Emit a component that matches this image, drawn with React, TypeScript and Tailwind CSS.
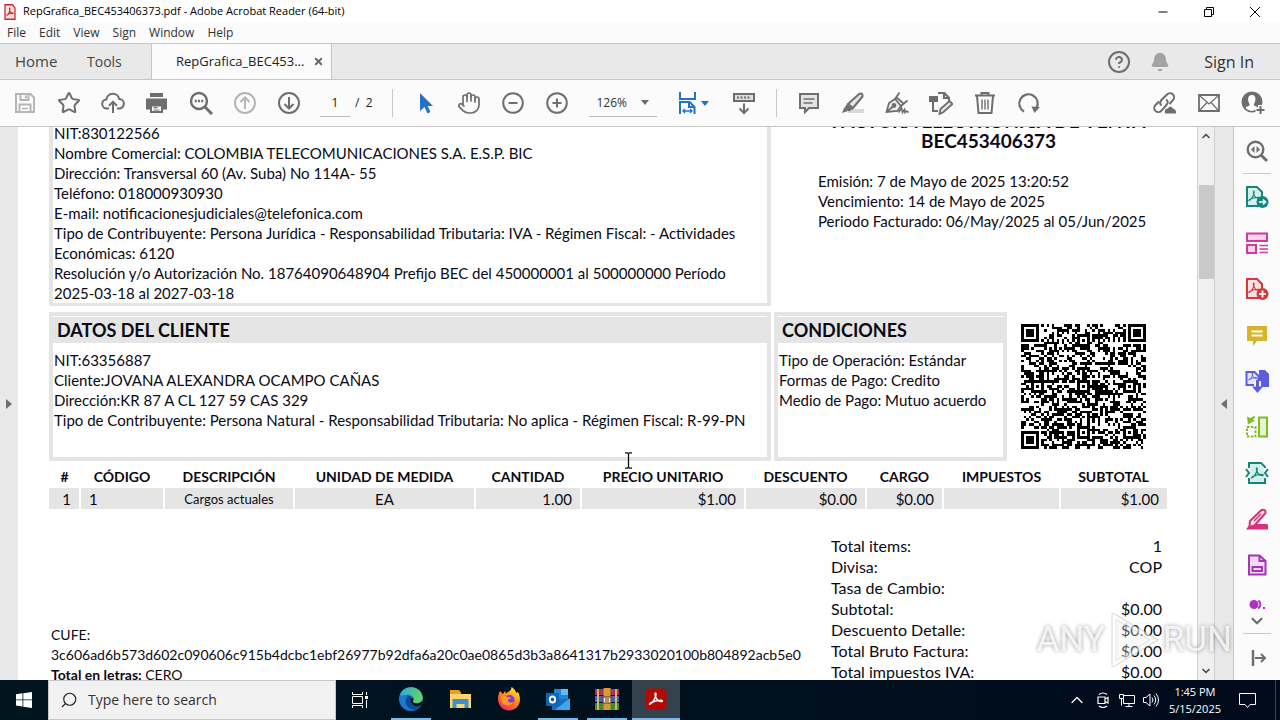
import React from "react";
import {
  Bell,
  ChevronDown,
  ChevronUp,
  CircleHelp,
  Hand,
  Minus,
  Search,
  Star,
  X,
} from "lucide-react";

const GRAY = "#6e6e6e";

interface IconProps {
  label: string;
  children: React.ReactNode;
  className?: string;
}

function IconButton({ label, children, className = "" }: IconProps) {
  return (
    <button
      type="button"
      aria-label={label}
      className={`flex h-6 w-6 shrink-0 items-center justify-center ${className}`}
    >
      {children}
    </button>
  );
}

interface GlyphProps {
  children: React.ReactNode;
  color?: string;
  width?: number;
}

function Glyph({ children, color = GRAY, width = 2 }: GlyphProps) {
  return (
    <svg
      viewBox="0 0 24 24"
      className="h-6 w-6"
      fill="none"
      stroke={color}
      strokeWidth={width}
      aria-hidden="true"
    >
      {children}
    </svg>
  );
}

const acrobatSwirl =
  "M6 17c2-1 4.500-4.500 5.500-7.500.6-2 .6-3.500 0-3.500s-.7 1.600 0 3.500c1 2.700 3.500 5 6 5 1.500 0 1.200-1.200-.5-1.200-3 0-7.500 1-10.500 2.700-1 .7-1.200 1.500-.5 1z";

/* ---------- window chrome ---------- */

const menus = ["File", "Edit", "View", "Sign", "Window", "Help"];

function TitleBar() {
  return (
    <header className="bg-white">
      <div className="flex h-[23px] items-center pl-1">
        <svg viewBox="0 0 24 24" className="h-4 w-3" preserveAspectRatio="none" aria-hidden="true">
          <path d="M2 1h15l5 5v17H2z" fill="#fbe3e3" stroke="#c9252d" strokeWidth="2.500" />
          <path d={acrobatSwirl} stroke="#c9252d" strokeWidth="1.800" fill="none" />
        </svg>
        <h1 className="ml-[7px] text-[11px] text-black">
          RepGrafica_BEC453406373.pdf - Adobe Acrobat Reader (64-bit)
        </h1>
        <div className="ml-auto flex pr-0.5 text-black">
          <button type="button" aria-label="Minimize" className="flex h-5 w-[46px] items-center justify-center">
            <Minus size={14} strokeWidth={1.8} />
          </button>
          <button type="button" aria-label="Restore" className="flex h-5 w-[46px] items-center justify-center">
            <svg viewBox="0 0 10 10" className="h-2.5 w-2.5" fill="none" stroke="#000" aria-hidden="true">
              <path d="M.5 2.500h7v7h-7zM2.500 2.500v-2h7v7h-2" />
            </svg>
          </button>
          <button type="button" aria-label="Close" className="flex h-5 w-[46px] items-center justify-center">
            <svg viewBox="0 0 10 10" className="h-2.5 w-2.5" stroke="#000" aria-hidden="true">
              <path d="M0 0l10 10M10 0L0 10" />
            </svg>
          </button>
        </div>
      </div>
      <nav className="flex h-5 items-center gap-[13px] bg-[#fbfbfb] pl-[7px] text-xs text-[#333]">
        {menus.map((menu) => (
          <button key={menu} type="button">
            {menu}
          </button>
        ))}
      </nav>
    </header>
  );
}

function TabBar() {
  return (
    <div className="flex h-[37px] items-stretch border-y border-[#c6c6c6] bg-[#e9e9e9] text-[15px] text-[#444]">
      <button type="button" className="w-[73px] pl-[15px] text-left">
        Home
      </button>
      <button type="button" className="w-[78px] pl-3.5 text-left text-sm">
        Tools
      </button>
      <div className="flex w-[181px] items-center border-x border-[#c6c6c6] bg-[#fbfbfb]">
        <button type="button" className="ml-6 flex-1 text-left text-[13px] text-[#222]">
          RepGrafica_BEC453...
        </button>
        <button type="button" aria-label="Close tab" className="mr-[7px]">
          <X size={11} strokeWidth={4} color="#666" />
        </button>
      </div>
      <div className="ml-auto flex items-center pr-[26px]">
        <button type="button" aria-label="Help">
          <CircleHelp size={24} strokeWidth={2} color={GRAY} />
        </button>
        <button type="button" aria-label="Notifications" className="ml-[19px]">
          <Bell size={20} strokeWidth={2} fill="#a3a3a3" color="#a3a3a3" />
        </button>
        <button type="button" className="ml-[34px] text-base text-[#333]">
          Sign In
        </button>
      </div>
    </div>
  );
}

function Divider() {
  return <span className="h-7 w-px shrink-0 bg-[#c8c8c8]" />;
}

function Toolbar() {
  return (
    <div className="flex h-[47px] items-center border-b border-[#c6c6c6] bg-[#fbfbfb] pr-[15px] pl-[13px]">
      <div className="flex gap-5">
        <IconButton label="Save">
          <Glyph color="#b5b5b5">
            <path d="M3 3h14.500L21 6.500V21H3z" />
            <path d="M7.500 3v6h8V3M12.800 4.500v3M6.500 21v-7.500h11V21" />
            <path d="M9 17.500h6" strokeWidth="1.500" />
          </Glyph>
        </IconButton>
        <IconButton label="Add to favourites">
          <Star size={24} strokeWidth={2} strokeLinejoin="miter" color={GRAY} />
        </IconButton>
        <IconButton label="Upload">
          <Glyph>
            <path d="M8 17.500H6a4.500 4.500 0 0 1-.6-9 6.500 6.500 0 0 1 12.800-.6A4.800 4.800 0 0 1 18 17.500h-2M12 22V11.500M8 14.800l4-4 4 4" />
          </Glyph>
        </IconButton>
        <IconButton label="Print">
          <Glyph>
            <path d="M5 2h13v4H5z" fill={GRAY} stroke="none" />
            <path d="M1 7.500h21v11h-4v-4H5v4H1z" fill={GRAY} stroke="none" />
            <path d="M6 14.500h11V21H6z" fill="#fff" />
            <path d="M8.500 16.700h4M8.500 19h6" strokeWidth="1.200" />
          </Glyph>
        </IconButton>
        <IconButton label="Find">
          <Glyph width={2.4}>
            <circle cx="10" cy="10" r="8" />
            <path d="M16 16l7 7" strokeWidth="3" />
            <path d="M5.800 10h2M9 10h2M12.200 10h2" />
          </Glyph>
        </IconButton>
        <IconButton label="Previous page">
          <Glyph color="#b5b5b5">
            <circle cx="12" cy="12" r="10" />
            <path d="M12 18V7M7.500 11L12 6.500 16.500 11" />
          </Glyph>
        </IconButton>
        <IconButton label="Next page">
          <Glyph>
            <circle cx="12" cy="12" r="10" />
            <path d="M12 6v11M7.500 13l4.500 4.500 4.500-4.500" />
          </Glyph>
        </IconButton>
      </div>
      <label className="ml-[19px] flex items-center text-xs text-[#222]">
        <input
          aria-label="Page number"
          defaultValue="1"
          className="h-[27px] w-[30px] border-b border-[#bdbdbd] bg-transparent text-center outline-none"
        />
        <span className="ml-[5px] whitespace-pre">/  2</span>
      </label>
      <div className="ml-[19px] flex items-center gap-5">
        <Divider />
        <IconButton label="Select">
          <Glyph color="none">
            <path d="M7 2v18l4.500-4 3 6.500 3-1.500-3-6h5.500z" fill="#2371c9" />
          </Glyph>
        </IconButton>
        <IconButton label="Pan">
          <Hand size={24} strokeWidth={1.7} color={GRAY} />
        </IconButton>
        <IconButton label="Zoom out">
          <Glyph>
            <circle cx="12" cy="12" r="9.800" />
            <path d="M7.500 12h9" />
          </Glyph>
        </IconButton>
        <IconButton label="Zoom in">
          <Glyph>
            <circle cx="12" cy="12" r="9.800" />
            <path d="M7.500 12h9M12 7.500v9" />
          </Glyph>
        </IconButton>
      </div>
      <div className="ml-5 flex h-[27px] w-[68px] shrink-0 items-center border-b border-[#bdbdbd]">
        <select
          aria-label="Zoom level"
          defaultValue="126"
          className="w-12 appearance-none bg-transparent pl-2 text-xs text-[#333] outline-none"
        >
          <option value="126">126%</option>
        </select>
        <span className="ml-1 border-x-4 border-t-[5px] border-x-transparent border-t-[#6e6e6e]" />
      </div>
      <button type="button" aria-label="Fit width" className="ml-[18px] flex items-center gap-0.5">
        <Glyph color="#2371c9">
          <path d="M5 1v7h15V1M5 23V11h9.500l5 5v7M14 11v5h5.500" />
          <path d="M8 20h9M10 18l-2 2 2 2M15 18l2 2-2 2" strokeWidth="1.300" />
        </Glyph>
        <span className="border-x-4 border-t-[5px] border-x-transparent border-t-[#2371c9]" />
      </button>
      <IconButton label="Reading mode" className="ml-[23px]">
        <Glyph>
          <path d="M2 3h20v7H2z" fill="#ddd" />
          <path d="M5 6.500h14" strokeDasharray="2 1.500" />
          <path d="M12 12.500v9M7.500 17.500l4.500 4.500 4.500-4.500" />
        </Glyph>
      </IconButton>
      <div className="ml-5 flex items-center gap-5">
        <Divider />
        <IconButton label="Comment">
          <Glyph>
            <path d="M3 3h18v14h-9l-4 4v-4H3z" fill="#e4e4e4" />
            <path d="M6.500 8h11M6.500 12h9" strokeWidth="1.500" />
          </Glyph>
        </IconButton>
        <IconButton label="Highlight">
          <Glyph>
            <path d="M10 18h13v4H6z" fill="#d8d8d8" stroke="none" />
            <path d="M7 13L18 3q4-1.500 3.500 2.500L12 17z" fill="#e4e4e4" />
            <path d="M6 13l6 5-4 2.500-5-3z" fill={GRAY} stroke="none" />
            <path d="M3 17l4 3-6 2z" fill={GRAY} stroke="none" />
          </Glyph>
        </IconButton>
        <IconButton label="Sign">
          <Glyph width={1.8}>
            <path d="M1.500 21L4 12l6-4 6 7-3.500 5z" fill="#eee" />
            <path d="M1.500 21l6.500-5.500M10 8l4.500-6.500M16 15l6.500-5.500M11.500 6.500l7 6" />
            <circle cx="9" cy="14.500" r="1.500" fill={GRAY} />
            <path d="M13.500 21.500l3-4.500 1 4.500 2-3 .5 3 1.500-1.500 2 1.500" strokeWidth="1.600" />
          </Glyph>
        </IconButton>
        <IconButton label="Edit PDF">
          <Glyph>
            <path d="M9 2h6.500L20 7v3M15 2v5h5M4 11v9h5" />
            <path d="M0 5h9v6H0z" fill={GRAY} stroke="none" />
            <path d="M10.500 23l1-5 9-8 3 3-9 8z" fill="#e4e4e4" strokeWidth="1.800" />
          </Glyph>
        </IconButton>
        <IconButton label="Delete">
          <Glyph>
            <path d="M2 4.500h20M8.500 4V2h7v2M4 5l1.500 17h13L20 5" />
            <path d="M9 8.500v10M12 8.500v10M15 8.500v10" strokeWidth="1.400" />
          </Glyph>
        </IconButton>
        <IconButton label="Rotate">
          <Glyph width={2.2}>
            <path d="M7 20.500a9.200 9.200 0 1 1 12.500-3.500" />
            <path d="M14.500 15.500l8.500.5-5.500 6z" fill={GRAY} stroke="none" />
          </Glyph>
        </IconButton>
      </div>
      <div className="ml-auto flex items-center gap-5">
        <IconButton label="Share link">
          <Glyph width={2}>
            <path d="M8.500 14.500q-2.500-2-.5-5l6-6a4 4 0 0 1 6 5.500l-3.500 4" />
            <path d="M13 8.500q3 2 .8 5l-5.500 6.300a4 4 0 0 1-6-5.500L6 10.500" />
            <path d="M12 22.500q-1-5 3-5 2-4 5 0 3.500 1 3 5z" fill={GRAY} stroke="none" />
          </Glyph>
        </IconButton>
        <IconButton label="Send by email">
          <Glyph width={1.8}>
            <path d="M2 4h20v16H2z" />
            <path d="M3 5l9 8 9-8M3 19l7-7.500M21 19l-7-7.500" strokeWidth="1.300" />
          </Glyph>
        </IconButton>
        <IconButton label="Add person">
          <Glyph>
            <circle cx="11" cy="11" r="10.500" fill={GRAY} stroke="none" />
            <path d="M11 4c-5 0-4.500 6-2.500 9v1.500c-1.500 1-3 1-4 2.500q6 6 12.500 0c-1-1.500-2.500-1.500-4-2.500V13c2-3 2.500-9-2-9z" fill="#fff" stroke="none" />
            <path d="M19.500 14v10M14.500 19h10" stroke="#fbfbfb" strokeWidth="5" />
            <path d="M19.500 15v8M15.500 19h8" />
          </Glyph>
        </IconButton>
      </div>
    </div>
  );
}

/* ---------- document ---------- */

const issuerLines = [
  "NIT:830122566",
  "Nombre Comercial: COLOMBIA TELECOMUNICACIONES S.A. E.S.P. BIC",
  "Dirección: Transversal 60 (Av. Suba) No 114A- 55",
  "Teléfono: 018000930930",
  "E-mail: notificacionesjudiciales@telefonica.com",
  "Tipo de Contribuyente: Persona Jurídica - Responsabilidad Tributaria: IVA - Régimen Fiscal: - Actividades",
  "Económicas: 6120",
  "Resolución y/o Autorización No. 18764090648904 Prefijo BEC del 450000001 al 500000000 Período",
  "2025-03-18 al 2027-03-18",
];

const clientLines = [
  "NIT:63356887",
  "Cliente:JOVANA ALEXANDRA OCAMPO CAÑAS",
  "Dirección:KR 87 A CL 127 59 CAS 329",
  "Tipo de Contribuyente: Persona Natural - Responsabilidad Tributaria: No aplica - Régimen Fiscal: R-99-PN",
];

const conditionLines = [
  "Tipo de Operación: Estándar",
  "Formas de Pago: Credito",
  "Medio de Pago: Mutuo acuerdo",
];

const columns = [
  { name: "#", col: "w-[31px]", cell: "pr-2 text-right", value: "1" },
  { name: "CÓDIGO", col: "w-[84px]", cell: "pl-2 text-left", value: "1" },
  { name: "DESCRIPCIÓN", col: "w-[130px]", cell: "text-center text-[13px]", value: "Cargos actuales" },
  { name: "UNIDAD DE MEDIDA", col: "w-[181px]", cell: "text-center", value: "EA" },
  { name: "CANTIDAD", col: "w-[106px]", cell: "pr-2 text-right", value: "1.00" },
  { name: "PRECIO UNITARIO", col: "w-[164px]", cell: "pr-2 text-right", value: "$1.00" },
  { name: "DESCUENTO", col: "w-[121px]", cell: "pr-2 text-right", value: "$0.00" },
  { name: "CARGO", col: "w-[77px]", cell: "pr-2 text-right", value: "$0.00" },
  { name: "IMPUESTOS", col: "w-[117px]", cell: "pr-2 text-right", value: "" },
  { name: "SUBTOTAL", col: "w-[107px]", cell: "pr-2 text-right", value: "$1.00" },
];

const totals = [
  ["Total items:", "1"],
  ["Divisa:", "COP"],
  ["Tasa de Cambio:", ""],
  ["Subtotal:", "$0.00"],
  ["Descuento Detalle:", "$0.00"],
  ["Total Bruto Factura:", "$0.00"],
  ["Total impuestos IVA:", "$0.00"],
];

const QR_SIZE = 49;

// ring distance from a centre, used for finder and alignment marks
function ring(x: number, y: number, cx: number, cy: number) {
  return Math.max(Math.abs(x - cx), Math.abs(y - cy));
}

function buildQrPath() {
  const finders = [[3, 3], [45, 3], [3, 45]];
  const aligns = [[24, 6], [6, 24], [24, 24], [42, 24], [24, 42], [42, 42]];
  let seed = 453406373;
  let path = "";
  for (let y = 0; y < QR_SIZE; y++) {
    for (let x = 0; x < QR_SIZE; x++) {
      seed = (Math.imul(seed, 1664525) + 1013904223) >>> 0;
      let dark = seed / 4294967296 < 0.5;
      if (x === 6) dark = y % 2 === 0;
      if (y === 6) dark = x % 2 === 0;
      for (const [cx, cy] of aligns) {
        const d = ring(x, y, cx, cy);
        if (d <= 2) dark = d !== 1;
      }
      for (const [cx, cy] of finders) {
        const d = ring(x, y, cx, cy);
        if (d <= 4) dark = d !== 2 && d !== 4;
      }
      if (dark) path += `M${x} ${y}h1v1h-1z`;
    }
  }
  return path;
}

const qrPath = buildQrPath();

function Panel({ title, lines }: { title: string; lines: string[] }) {
  return (
    <section className="border-4 border-[#e5e5e5] pb-[27px]">
      <h2 className="mt-px bg-[#e5e5e5] pl-1 text-lg leading-[26px] font-bold">{title}</h2>
      <div className="mt-[7px] pl-px">
        {lines.map((line) => (
          <p key={line}>{line}</p>
        ))}
      </div>
    </section>
  );
}

function InvoicePage() {
  return (
    <article className="-mt-4 pr-[30px] pl-[31px] font-['Lato','Noto_Sans',sans-serif] text-[15px] leading-5 whitespace-nowrap text-[#0a0a14]">
      <div className="grid grid-cols-[722fr_393fr] gap-[3px]">
        <section className="border-x-4 border-b-[3px] border-[#e5e5e5] pt-3 pl-px">
          {issuerLines.map((line) => (
            <p key={line}>{line}</p>
          ))}
        </section>
        <section className="pl-9">
          <h2 className="text-center text-[19px] font-bold">
            FACTURA ELECTRÓNICA DE VENTA
            <br />
            BEC453406373
          </h2>
          <div className="mt-5 pl-2">
            <p>Emisión: 7 de Mayo de 2025 13:20:52</p>
            <p>Vencimiento: 14 de Mayo de 2025</p>
            <p>Periodo Facturado: 06/May/2025 al 05/Jun/2025</p>
          </div>
        </section>
      </div>

      <div className="mt-1.5 grid grid-cols-[722fr_233fr_157fr] gap-[3px]">
        <Panel title="DATOS DEL CLIENTE" lines={clientLines} />
        <Panel title="CONDICIONES" lines={conditionLines} />
        <svg
          viewBox="0 0 49 49"
          role="img"
          aria-label="QR code"
          shapeRendering="crispEdges"
          className="mt-3 ml-[11px] h-[125px] w-[125px]"
        >
          <path d={qrPath} fill="#000" />
        </svg>
      </div>

      <table className="mt-[5px] w-full table-fixed">
        <colgroup>
          {columns.map((column) => (
            <col key={column.name} className={column.col} />
          ))}
        </colgroup>
        <thead>
          <tr className="h-[22px] text-sm">
            {columns.map((column) => (
              <th key={column.name} className="p-0 pb-px">
                {column.name}
              </th>
            ))}
          </tr>
        </thead>
        <tbody>
          <tr className="h-[21px] bg-[#e5e5e5]">
            {columns.map((column) => (
              <td
                key={column.name}
                className={`border-r-2 border-white py-0 last:border-r-0 ${column.cell}`}
              >
                {column.value}
              </td>
            ))}
          </tr>
        </tbody>
      </table>

      <div className="mt-[26px] flex items-start justify-between pr-[5px] pl-0.5">
        <div className="mt-[90px] text-sm leading-5">
          <p>CUFE:</p>
          <p>3c606ad6b573d602c090606c915b4dcbc1ebf26977b92dfa6a20c0ae0865d3b3a8641317b2933020100b804892acb5e0</p>
          <p>
            <b>Total en letras:</b> CERO
          </p>
        </div>
        <dl className="w-[331px] text-base leading-[21px]">
          {totals.map(([label, value]) => (
            <div key={label} className="flex justify-between">
              <dt>{label}</dt>
              <dd>{value}</dd>
            </div>
          ))}
        </dl>
      </div>
    </article>
  );
}

function Scrollbar() {
  return (
    <div className="flex w-[18px] shrink-0 flex-col items-center border-x border-[#d0d0d0] bg-[#f0f0f0]">
      <button type="button" aria-label="Scroll up" className="flex h-[18px] items-center">
        <ChevronUp size={12} strokeWidth={3.5} color="#505050" />
      </button>
      <div className="mt-10 h-[94px] w-[15px] bg-[#c9c9c9]" />
      <button type="button" aria-label="Scroll down" className="mt-auto flex h-[18px] items-center">
        <ChevronDown size={12} strokeWidth={3.5} color="#505050" />
      </button>
    </div>
  );
}

/* ---------- tools rail ---------- */

interface Tool {
  label: string;
  icon: React.ReactNode;
}

const tools: Tool[] = [
  {
    label: "Export PDF",
    icon: (
      <Glyph color="#13857c">
        <path d="M2 2h10l5 5v14H2z" fill="#d5efed" />
        <path d={acrobatSwirl} transform="translate(-1 1) scale(.85)" strokeWidth="1.300" />
        <circle cx="17.500" cy="17" r="6" fill="#13857c" stroke="none" />
        <path d="M14 17h6M18 14.500l2.500 2.500-2.500 2.500" stroke="#fff" strokeWidth="1.600" />
      </Glyph>
    ),
  },
  {
    label: "Edit PDF",
    icon: (
      <Glyph color="#cf3a9b">
        <path d="M2 2.500h20v7.500H2zM2 14h9v8H2z" fill="#f6d3ea" />
        <path d="M14.500 14.500H23M14.500 18H23M14.500 21.500H23" strokeWidth="1.400" />
      </Glyph>
    ),
  },
  {
    label: "Create PDF",
    icon: (
      <Glyph color="#d7373f">
        <path d="M2 2h10l5 5v14H2z" fill="#fbe3e3" />
        <path d={acrobatSwirl} transform="translate(-1 1) scale(.85)" strokeWidth="1.300" />
        <circle cx="17.500" cy="17" r="6" fill="#d7373f" stroke="none" />
        <path d="M14 17h7M17.500 13.500v7" stroke="#fff" strokeWidth="1.800" />
      </Glyph>
    ),
  },
  {
    label: "Comment",
    icon: (
      <Glyph color="#fff">
        <path d="M2 3h20v15H12l-4 5v-5H2z" fill="#d6b52a" stroke="none" />
        <path d="M6.500 8.500h11M6.500 12.500h11" />
      </Glyph>
    ),
  },
  {
    label: "Combine Files",
    icon: (
      <Glyph color="#5c5ce0">
        <path d="M14 1h6l4 4v13H14z" fill="#5c5ce0" stroke="none" />
        <path d="M1.500 3h8l4 4v9h-12z" fill="#e4e4fb" />
        <path d={acrobatSwirl} transform="scale(.65)" strokeWidth="1.500" />
        <path d="M12.500 12v8" stroke="#fbfbfb" strokeWidth="7" />
        <path d="M12.500 11v9" strokeWidth="3" />
        <path d="M7 17.500h11L12.500 24z" fill="#5c5ce0" stroke="none" />
      </Glyph>
    ),
  },
  {
    label: "Organize Pages",
    icon: (
      <Glyph color="#82b927">
        <path d="M14 2.500h8v19h-8z" fill="#e6f3d1" />
        <path d="M2 12h8.500v9.500H2z" strokeDasharray="2.500 1.500" />
        <path d="M10 2Q6 3 5 6" />
        <path d="M2 1.500l1 8 7-4z" fill="#82b927" stroke="none" />
      </Glyph>
    ),
  },
  {
    label: "Compress PDF",
    icon: (
      <Glyph color="#13857c">
        <path d="M4 7V2h12l4 4v1M4 17v5h16v-5" />
        <path d="M5.500 3h10L19 6.500V21H5.500z" fill="#d5efed" stroke="none" />
        <path d={acrobatSwirl} transform="translate(1.500 1.500) scale(.9)" strokeWidth="1.400" />
        <path d="M1 8l3 4-3 4M23 8l-3 4 3 4" />
      </Glyph>
    ),
  },
  {
    label: "Redact",
    icon: (
      <Glyph color="#d6317c">
        <path d="M1 22.500L5 17h17l1 1v4.500z" fill="#d6317c" stroke="none" />
        <path d="M5 14L16.500 3q4.500-1 4 3L9.500 18.500 4.500 20z" fill="#fbdcea" />
        <path d="M9 14l7-7" strokeWidth="1.400" />
      </Glyph>
    ),
  },
  {
    label: "Prepare Form",
    icon: (
      <Glyph color="#a832b8">
        <path d="M4 2.500h10.500L20.500 8v13.500H4z" fill="#f1dcf4" />
        <path d="M14.500 2.500V8h6M7.500 14h9.500v4H7.500z" />
      </Glyph>
    ),
  },
];

function ToolsRail() {
  return (
    <aside className="flex w-[47px] shrink-0 flex-col items-center border-l border-[#c6c6c6] bg-[#fbfbfb]">
      <IconButton label="Search tools" className="mt-3">
        <Glyph width={2.4}>
          <circle cx="10.500" cy="10.500" r="7.800" />
          <path d="M16 16l6 6" strokeWidth="3" />
          <path d="M9.500 7v7L6 10.500zM11.500 7v7l3.500-3.500z" fill={GRAY} stroke="none" />
        </Glyph>
      </IconButton>
      <span className="mt-2.5 h-px w-7 bg-[#c8c8c8]" />
      <div className="mt-[11px] flex flex-col gap-[22px]">
        {tools.map((tool) => (
          <IconButton key={tool.label} label={tool.label}>
            {tool.icon}
          </IconButton>
        ))}
      </div>
      <svg viewBox="0 0 16 9" className="mt-[23px] h-[9px] w-4" aria-hidden="true">
        <circle cx="5" cy="4.500" r="4.500" fill="#b130bd" />
        <path d="M9.500.5q4 4-.3 8" stroke="#b130bd" strokeWidth="2" fill="none" />
        <path d="M14 7h2v2h-2z" fill="#b130bd" />
      </svg>
      <button type="button" aria-label="More tools" className="mt-[3px]">
        <ChevronDown size={18} strokeWidth={3} color={GRAY} />
      </button>
      <span className="mt-[3px] h-px w-7 bg-[#c8c8c8]" />
      <button type="button" aria-label="Collapse pane" className="mt-4 ml-1">
        <svg viewBox="0 0 16 16" className="h-4 w-4" fill="none" stroke={GRAY} strokeWidth="2" aria-hidden="true">
          <path d="M2 0v16" strokeWidth="2.500" />
          <path d="M4 8h10M10 4l4 4-4 4" />
        </svg>
      </button>
    </aside>
  );
}

/* ---------- taskbar ---------- */

interface TaskApp {
  label: string;
  state: "open" | "idle" | "active";
  icon: React.ReactNode;
}

const taskApps: TaskApp[] = [
  {
    label: "Edge",
    state: "open",
    icon: (
      <svg viewBox="0 0 24 24" className="h-6 w-6" aria-hidden="true">
        <defs>
          <linearGradient id="edgeTop" x1="0" y1="0" x2="1" y2=".3">
            <stop offset="0" stopColor="#2aa5dd" />
            <stop offset="1" stopColor="#63d36b" />
          </linearGradient>
        </defs>
        <circle cx="12" cy="12" r="12" fill="#1a78cf" />
        <path d="M1 8C4-2 20-3 23.500 9c1 6-4 8-8 7-2-.6-2-1.500-1.200-2.500C16 10 11 6 6 8q-3 .8-5 0z" fill="url(#edgeTop)" />
        <path d="M9 9c-4 3-3 10 3 13 4 2 7 0 10-4-4 2.500-9 1-10-3-.6-2 1-4 0-6z" fill="#0d4a94" />
        <path d="M13.500 10.500c2.500 2-.8 3.500 1 5 3 1.500 6 1.200 8.500-1.500L24 17l-3 1.500c-4 2-10-1-9.500-6z" fill="#00141e" />
      </svg>
    ),
  },
  {
    label: "File Explorer",
    state: "idle",
    icon: (
      <svg viewBox="0 0 24 24" className="h-6 w-6" aria-hidden="true">
        <path d="M2 3h9l2 2.500V21H2z" fill="#e8a31c" />
        <path d="M2 7h21v14H2z" fill="#fcd667" />
        <path d="M5.500 12h14q1 0 1 1v8h-4v-4h-8v4h-4v-8q0-1 1-1z" fill="#3e8ed0" />
      </svg>
    ),
  },
  {
    label: "Firefox",
    state: "idle",
    icon: (
      <svg viewBox="0 0 24 24" className="h-6 w-6" aria-hidden="true">
        <defs>
          <linearGradient id="fox" x1=".8" y1="0" x2=".2" y2="1">
            <stop offset="0" stopColor="#fff03a" />
            <stop offset=".45" stopColor="#ff8a16" />
            <stop offset="1" stopColor="#f0206e" />
          </linearGradient>
        </defs>
        <path d="M3 4l3 3 2-3 1 2.500C11 4 14 5 14.500 0 18 2 19 5 19.500 6l1.500-1c5 9 0 18.500-9 18.500S-2 14 3 4z" fill="url(#fox)" />
        <circle cx="12.500" cy="13" r="5" fill="#7a3be0" />
        <path d="M4 10c3-2 6-1 7 .5 1.500-.5 3 0 3 1-2 0-3 1-3 2.500 1 2 4 2 6 .5-1 4-9 5.500-12 1z" fill="#ff9820" />
      </svg>
    ),
  },
  {
    label: "Outlook",
    state: "open",
    icon: (
      <svg viewBox="0 0 24 24" className="h-6 w-6" aria-hidden="true">
        <path d="M8 2h14v12H8z" fill="#1f86d8" />
        <path d="M15 2h7v6h-7z" fill="#55c2f5" />
        <path d="M6 12h18v11H6z" fill="#1a6cc0" />
        <path d="M24 11L9 23h15z" fill="#38a8ea" />
        <path d="M0 6h13v13H0z" fill="#0d66b8" />
        <ellipse cx="6.500" cy="12.500" rx="2.700" ry="3" fill="none" stroke="#fff" strokeWidth="1.800" />
      </svg>
    ),
  },
  {
    label: "WinRAR",
    state: "open",
    icon: (
      <svg viewBox="0 0 24 24" className="h-6 w-6" aria-hidden="true">
        <path d="M0 2h24v6H0z" fill="#a8325c" />
        <path d="M0 9h24v6H0z" fill="#4a62b8" />
        <path d="M0 16h24v7H0z" fill="#3f8a34" />
        <path d="M2 2h2v21H2zM20 2h2v21h-2z" fill="#d8b46a" />
        <path d="M8.500 1h7v22h-7z" fill="#d99a2e" />
        <path d="M8 10h8v6H8z" fill="#f4e9cf" stroke="#5a3414" />
        <path d="M11 11v4M13 11v4" stroke="#5a3414" />
      </svg>
    ),
  },
  {
    label: "Acrobat Reader",
    state: "active",
    icon: (
      <svg viewBox="0 0 24 24" className="h-6 w-6" aria-hidden="true">
        <rect x="1.500" y="1.500" width="21" height="21" rx="4" fill="#b30b00" />
        <path d={acrobatSwirl} fill="none" stroke="#fff" strokeWidth="1.500" />
      </svg>
    ),
  },
];

const underline = {
  open: "mx-1 bg-[#76b9ed]",
  idle: "bg-transparent",
  active: "bg-[#76b9ed]",
};

function Taskbar() {
  return (
    <footer className="flex h-10 shrink-0 items-stretch bg-linear-to-r from-[#00161f] to-[#000b1c] text-white">
      <button type="button" aria-label="Start" className="flex w-12 items-center justify-center">
        <svg viewBox="0 0 16 16" className="h-4 w-4" fill="#fff" aria-hidden="true">
          <path d="M0 2.300l6.500-1v6.200H0zM7.300 1.200L16 0v7.500H7.300zM0 8.300h6.500v6.200l-6.500-1zM7.300 8.300H16V16l-8.700-1.200z" />
        </svg>
      </button>
      <label className="flex w-72 items-center border border-[#c8c8c8] bg-[#f2f2f2] pl-[11px] text-[#222]">
        <Search size={18} strokeWidth={1.5} className="-scale-x-100" />
        <input
          type="search"
          aria-label="Search"
          placeholder="Type here to search"
          className="ml-2.5 min-w-0 flex-1 bg-transparent text-sm outline-none placeholder:text-[#333]"
        />
      </label>
      <button type="button" aria-label="Task View" className="flex w-12 items-center justify-center">
        <svg viewBox="0 0 16 16" className="h-4 w-4" fill="none" stroke="#fff" aria-hidden="true">
          <path d="M.5 0v2.500h10V0M.5 4.500h10v7H.5zM.5 16v-2.500h10V16M14.500 0v3M14.500 8v8" />
          <path d="M13 4h3v3h-3z" fill="#fff" stroke="none" />
        </svg>
      </button>
      <div className="ml-[3px] flex gap-px">
        {taskApps.map((app) => (
          <button
            key={app.label}
            type="button"
            aria-label={app.label}
            className={`flex w-12 flex-col ${app.state === "active" ? "bg-[#33424c]" : ""}`}
          >
            <span className="flex w-full flex-1 items-center justify-center">{app.icon}</span>
            <span className={`h-0.5 self-stretch ${underline[app.state]}`} />
          </button>
        ))}
      </div>
      <div className="ml-auto flex items-center">
        <button type="button" aria-label="Show hidden icons">
          <ChevronUp size={20} strokeWidth={1.5} />
        </button>
        <svg viewBox="0 0 16 16" className="ml-2 h-4 w-4" fill="none" stroke="#fff" aria-hidden="true">
          <path d="M3 5h7v6.500H3zM10 7l3-1.500V11l-3-1.500M4 2.500q4-3 8 0M4 14q4 3 8 0" strokeWidth="1.200" />
        </svg>
        <svg viewBox="0 0 16 16" className="ml-2 h-4 w-4" fill="none" stroke="#fff" aria-hidden="true">
          <path d="M5 3.500h10.500v8H4.500V7M10 11.500v3M6.500 14.500h7M.5 2.500h4v4h-4zM2.500 6.500v7" />
        </svg>
        <svg viewBox="0 0 16 16" className="ml-2 h-4 w-4" fill="none" stroke="#fff" aria-hidden="true">
          <path d="M.5 5.500H3L7 2v12l-4-3.500H.5zM9 5.500q2 2.500 0 5M11 3.500q3.500 4.500 0 9M13 1.500q5 6.500 0 13" />
        </svg>
        <div className="ml-2.5 text-center text-[11px] leading-[17px]">
          <p>1:45 PM</p>
          <p>5/15/2025</p>
        </div>
        <button type="button" aria-label="Notifications" className="ml-[18px]">
          <svg viewBox="0 0 17 17" className="h-[17px] w-[17px]" fill="none" stroke="#fff" aria-hidden="true">
            <path d="M.5 1.500h16v11H11l-2.500 3-2.500-3H.5z" />
          </svg>
        </button>
        <span className="mr-1 ml-[19px] h-10 w-px bg-[#3b4653]" />
      </div>
    </footer>
  );
}

export default function App() {
  return (
    <div className="flex h-screen flex-col overflow-hidden bg-white font-['Open_Sans','Noto_Sans',sans-serif]">
      <TitleBar />
      <TabBar />
      <Toolbar />
      <div className="relative flex min-h-0 flex-1">
        <button
          type="button"
          aria-label="Show navigation pane"
          className="flex w-[18px] shrink-0 items-center justify-center bg-[#e9e9e9]"
        >
          <span className="border-y-[5px] border-l-[6px] border-y-transparent border-l-[#6e6e6e]" />
        </button>
        <main className="min-w-0 flex-1 overflow-hidden bg-white">
          <InvoicePage />
        </main>
        <Scrollbar />
        <button
          type="button"
          aria-label="Hide tools pane"
          className="flex w-[18px] shrink-0 items-center justify-center bg-[#e9e9e9]"
        >
          <span className="border-y-[5px] border-r-[6px] border-y-transparent border-r-[#6e6e6e]" />
        </button>
        <ToolsRail />

        {/* text cursor */}
        <svg
          viewBox="0 0 9 17"
          className="pointer-events-none absolute top-[325px] left-[624px] h-[17px] w-[9px]"
          fill="none"
          stroke="#111"
          aria-hidden="true"
        >
          <path d="M1 .8h2.500l1 1 1-1H8M4.500 1.500v14M1 16.200h2.500l1-1 1 1H8" strokeWidth="1.300" />
        </svg>

        {/* watermark */}
        <div className="pointer-events-none absolute right-12 bottom-[13px] flex items-center gap-1 font-['Roboto',sans-serif] text-[35px] leading-[48px] text-white/80 [text-shadow:0_0_4px_rgb(0_0_0/0.4)]">
          <span>ANY</span>
          <svg viewBox="0 0 50 54" className="h-[54px] w-[50px] opacity-60" fill="none" aria-hidden="true">
            <path d="M5 3l40 24L5 51z" stroke="#bbb" strokeWidth="5" />
            <path d="M5 3l40 24L5 51z" fill="#eee" fillOpacity=".5" stroke="#fff" strokeWidth="3" />
          </svg>
          <span>RUN</span>
        </div>
      </div>
      <Taskbar />
    </div>
  );
}
